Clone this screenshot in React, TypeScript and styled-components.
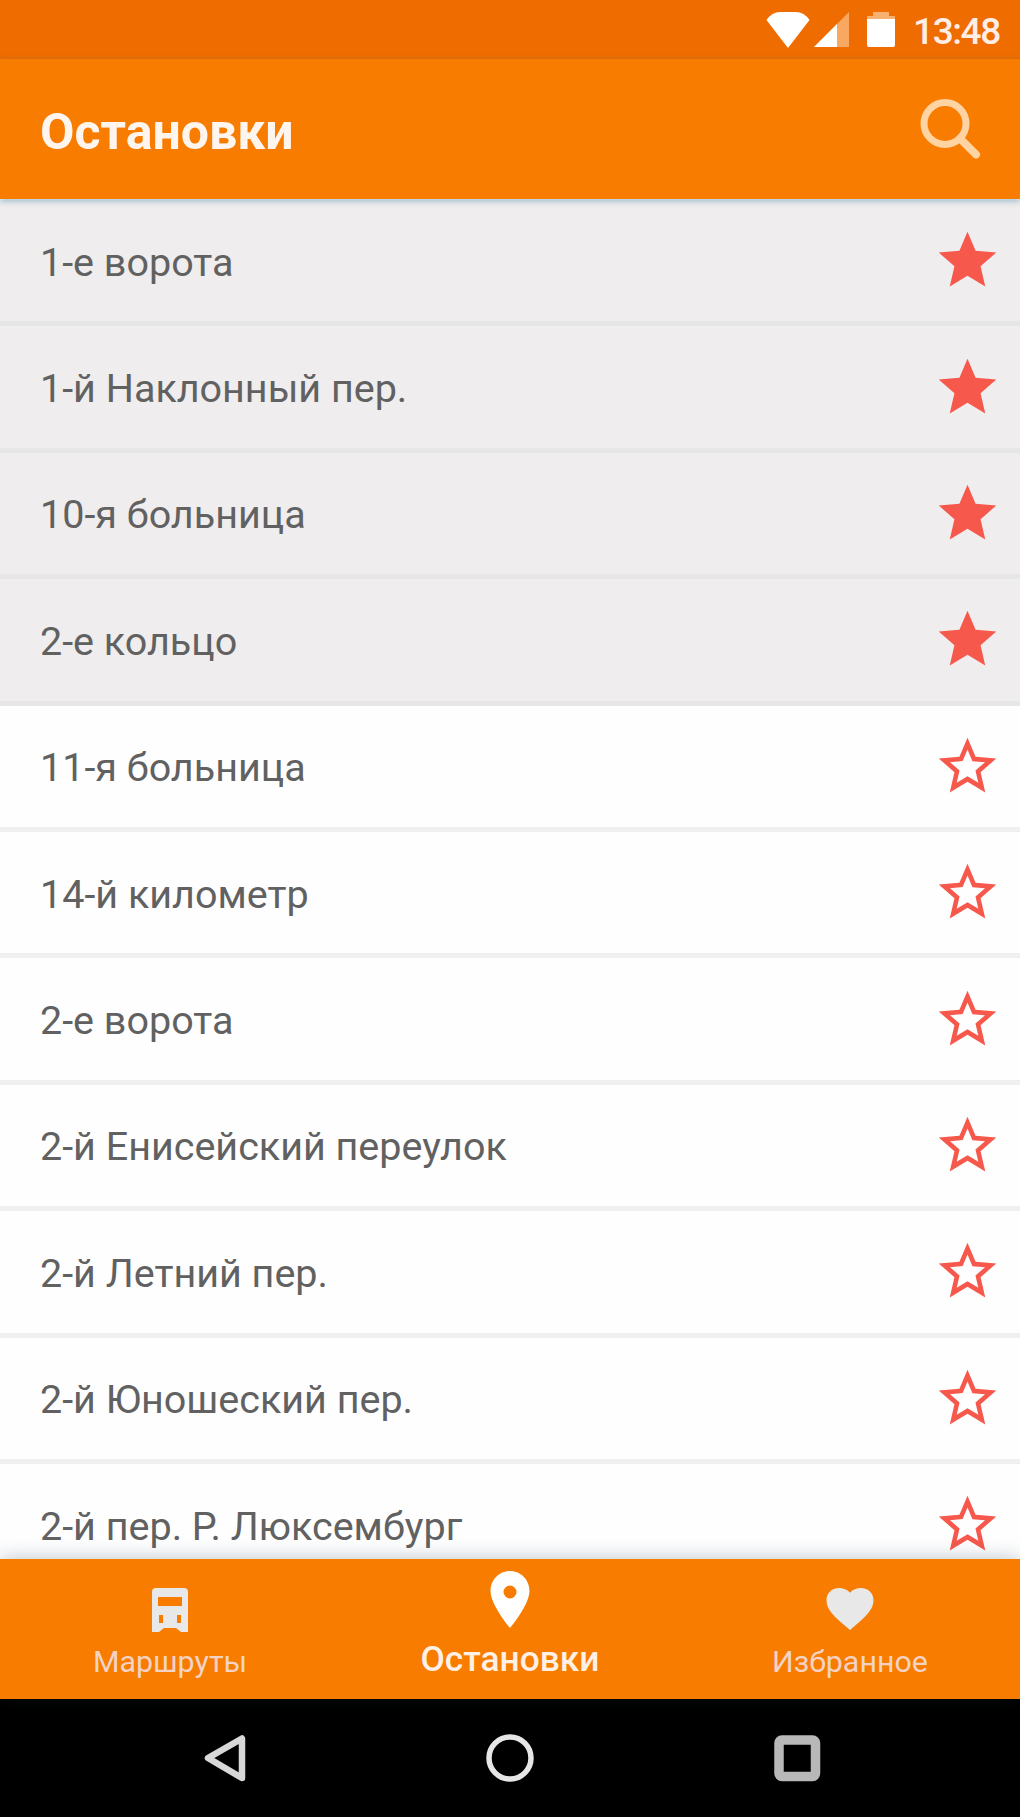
import React from "react";
import styled, { createGlobalStyle } from "styled-components";

const GlobalStyle = createGlobalStyle`
  * { box-sizing: border-box; }
  body { margin: 0; font-family: Roboto, "Noto Sans", sans-serif; background: #000; }
`;

const Screen = styled.div`
  width: 1020px;
  height: 1817px;
  display: flex;
  flex-direction: column;
  overflow: hidden;
  background: #fefefe;
`;

const StatusBar = styled.div`
  flex: none;
  height: 59px;
  background: #ef6c00;
  display: flex;
  align-items: center;
  justify-content: flex-end;
  padding-right: 21px;
`;

const StatusIcons = styled.svg`
  width: 132px;
  height: 59px;
  margin-right: 15px;
`;

const Clock = styled.span`
  width: 86px;
  font-size: 37px;
  line-height: 59px;
  font-weight: 500;
  letter-spacing: -1.4px;
  color: #ffeee6;
  white-space: nowrap;
  padding-top: 4px;
`;

const AppBar = styled.header`
  flex: none;
  height: 140px;
  background: #f77c00;
  display: flex;
  align-items: center;
  justify-content: space-between;
  padding: 0 37px 0 40px;
  box-shadow: 0 2px 6px rgba(30, 110, 150, 0.42);
  z-index: 1;
`;

const Title = styled.h1`
  margin: 0;
  font-size: 50px;
  line-height: 60px;
  font-weight: 700;
  color: #fff5ef;
  padding-top: 6px;
`;

const SearchIcon = styled.svg`
  width: 64px;
  height: 64px;
`;

const List = styled.ul`
  flex: 1;
  min-height: 0;
  margin: 0;
  padding: 1px 0 0;
  list-style: none;
  overflow: hidden;
`;

const Row = styled.li<{ $favorite: boolean }>`
  height: 126.4px;
  display: flex;
  align-items: center;
  justify-content: space-between;
  padding: 0 18px 0 40px;
  background: ${(p) => (p.$favorite ? "#efeded" : "#fefefe")};
  border-bottom: 5px solid ${(p) => (p.$favorite ? "#e7e6e6" : "#f0f0f0")};
`;

const StopName = styled.span`
  font-size: 39.5px;
  line-height: 48px;
  padding-top: 4px;
  color: #616161;
  white-space: nowrap;
`;

const StarIcon = styled.svg`
  width: 69px;
  height: 69px;
  fill: #f6584c;
`;

const TabBar = styled.nav`
  flex: none;
  height: 140px;
  background: #f77c00;
  display: grid;
  grid-template-columns: repeat(3, 1fr);
  box-shadow: 0 -3px 16px rgba(40, 70, 90, 0.24);
  z-index: 1;
`;

const Tab = styled.div<{ $active?: boolean }>`
  display: flex;
  flex-direction: column;
  align-items: center;
  padding-top: ${(p) => (p.$active ? 9 : 18)}px;
  color: ${(p) => (p.$active ? "#fff" : "#e8e8e8")};
`;

const TabIcon = styled.svg`
  width: 64px;
  height: 64px;
  fill: currentColor;
`;

const TabLabel = styled.span<{ $active?: boolean }>`
  font-size: ${(p) => (p.$active ? 35.3 : 30.4)}px;
  line-height: 40px;
  margin-top: ${(p) => (p.$active ? 7 : 1)}px;
  font-weight: ${(p) => (p.$active ? 500 : 400)};
  color: ${(p) => (p.$active ? "#fff0e6" : "#f4d3c4")};
`;

const SystemBar = styled.div`
  flex: none;
  height: 118px;
  background: #000;
  display: flex;
  align-items: center;
  justify-content: center;
  gap: 227px;
`;

const SystemIcon = styled.svg`
  width: 60px;
  height: 60px;
  fill: none;
`;

const stops = [
  { name: "1-е ворота", favorite: true },
  { name: "1-й Наклонный пер.", favorite: true },
  { name: "10-я больница", favorite: true },
  { name: "2-е кольцо", favorite: true },
  { name: "11-я больница", favorite: false },
  { name: "14-й километр", favorite: false },
  { name: "2-е ворота", favorite: false },
  { name: "2-й Енисейский переулок", favorite: false },
  { name: "2-й Летний пер.", favorite: false },
  { name: "2-й Юношеский пер.", favorite: false },
  { name: "2-й пер. Р. Люксембург", favorite: false },
];

const STAR = "M12 17.27L18.18 21l-1.64-7.03L22 9.24l-7.19-.61L12 2 9.19 8.63 2 9.24l5.46 4.73L5.82 21z";
const STAR_BORDER =
  "M22 9.24l-7.19-.62L12 2 9.19 8.63 2 9.24l5.46 4.73L5.82 21 12 17.27 18.18 21l-1.63-7.03L22 9.24zM12 15.4l-3.76 2.27 1-4.28-3.32-2.88 4.38-.38L12 6.1l1.71 4.04 4.38.38-3.32 2.88 1 4.28L12 15.4z";

export default function App() {
  return (
    <>
      <GlobalStyle />
      <Screen>
        <StatusBar>
          <StatusIcons viewBox="0 0 132 59">
            <path d="M0.500 20 Q6 12 14 12H30Q38 12 43.500 20L22 48Z" fill="#fff" />
            <path d="M83 12V47H48Z" fill="#f8a860" />
            <path d="M71 24V47H48Z" fill="#fff" />
            <path d="M101 19V16H107V12H123V16H129V19Z" fill="#f8b070" />
            <path d="M101 19H129V45Q129 47 127 47H103Q101 47 101 45Z" fill="#fff" />
          </StatusIcons>
          <Clock>13:48</Clock>
        </StatusBar>
        <AppBar>
          <Title>Остановки</Title>
          <SearchIcon viewBox="0 0 64 64" fill="none" stroke="#ffd3a2" strokeWidth="7">
            <circle cx="26" cy="26.500" r="21" />
            <path d="M41 41.500L57 57.500" strokeWidth="8" strokeLinecap="round" />
          </SearchIcon>
        </AppBar>
        <List>
          {stops.map((stop) => (
            <Row key={stop.name} $favorite={stop.favorite}>
              <StopName>{stop.name}</StopName>
              <StarIcon viewBox="0 0 24 24">
                <path d={stop.favorite ? STAR : STAR_BORDER} />
              </StarIcon>
            </Row>
          ))}
        </List>
        <TabBar>
          <Tab>
            <TabIcon viewBox="0 0 64 64">
              <path
                fillRule="evenodd"
                d="M18 11H46Q50 11 50 15V55H43L38 51H26L21 55H14V15Q14 11 18 11ZM20 20V29H44V20ZM21 38V46H25V38ZM39 38V46H43V38Z"
              />
            </TabIcon>
            <TabLabel>Маршруты</TabLabel>
          </Tab>
          <Tab $active>
            <TabIcon viewBox="0 0 64 64">
              <path fillRule="evenodd" d="M32 3C21 3 12.500 12 12.500 23C12.500 37 32 60 32 60S51.500 37 51.500 23C51.500 12 43 3 32 3ZM32 17.500A6.500 6.500 0 1 1 32 30.500A6.500 6.500 0 1 1 32 17.500Z" />
            </TabIcon>
            <TabLabel $active>Остановки</TabLabel>
          </Tab>
          <Tab>
            <TabIcon viewBox="0 0 64 64">
              <path d="M32 53L28.500 50C16.200 39.700 8.500 32.300 8.500 23.400C8.500 16 13.800 11 21 11C25.200 11 29.300 12.500 32 15.700C34.700 12.500 38.800 11 43 11C50.200 11 55.500 16 55.500 23.400C55.500 32.300 47.800 39.700 35.500 50Z" />
            </TabIcon>
            <TabLabel>Избранное</TabLabel>
          </Tab>
        </TabBar>
        <SystemBar>
          <SystemIcon viewBox="0 0 60 60" stroke="#d8d8d8" strokeWidth="6.500" strokeLinejoin="round">
            <path d="M15 30L49 10.500V50Z" />
          </SystemIcon>
          <SystemIcon viewBox="0 0 60 60" stroke="#e6e6e6" strokeWidth="5.500">
            <circle cx="30" cy="30" r="21" />
          </SystemIcon>
          <SystemIcon viewBox="0 0 60 60" stroke="#b8b8b8" strokeWidth="9.500" strokeLinejoin="round">
            <rect x="12" y="12" width="36.500" height="36.500" rx="3" />
          </SystemIcon>
        </SystemBar>
      </Screen>
    </>
  );
}
